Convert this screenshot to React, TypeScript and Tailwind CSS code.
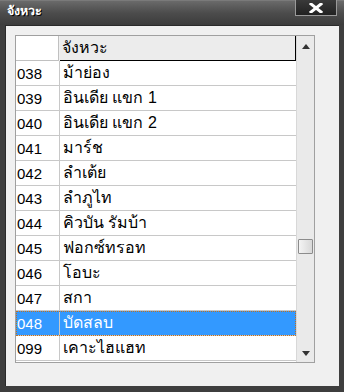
import React from "react";

const rows: [string, string][] = [
  ["038", "ม้าย่อง"],
  ["039", "อินเดีย แขก 1"],
  ["040", "อินเดีย แขก 2"],
  ["041", "มาร์ช"],
  ["042", "ลำเต้ย"],
  ["043", "ลำภูไท"],
  ["044", "คิวบัน รัมบ้า"],
  ["045", "ฟอกซ์ทรอท"],
  ["046", "โอบะ"],
  ["047", "สกา"],
  ["048", "บัดสลบ"],
  ["099", "เคาะไฮแฮท"],
];

const font = { fontFamily: '"Liberation Sans", "Noto Sans", Tahoma, sans-serif' };

export default function App() {
  return (
    <div
      className="w-[344px] h-[392px] bg-[#3e3e3e] flex flex-col overflow-hidden"
      style={font}
    >
      {/* Title bar */}
      <div className="h-[25px] relative bg-gradient-to-b from-[#6a6a6a] via-[#4c4c4c] to-[#3c3c3c] border-t border-[#7a7a7a]">
        <div
          className="absolute left-[7px] top-[4px] text-[12.5px] font-bold text-white leading-none"
          style={{ textShadow: "1px 1px 0 #000" }}
        >
          จังหวะ
        </div>
        <div className="absolute left-[295px] top-[-1px] w-[42px] h-[16px] border border-[#9a9a9a] border-t-0 bg-gradient-to-b from-[#3a3a3a] to-[#222] flex items-center justify-center">
          <svg width="14" height="10" viewBox="0 0 14 10">
            <path d="M2 1 L12 9 M12 1 L2 9" stroke="#fff" strokeWidth="3" strokeLinecap="square" />
          </svg>
        </div>
      </div>

      {/* Client */}
      <div className="flex-1 ml-[5px] mr-[5px] mb-[6px] bg-[#f0f0f0] border-l border-t border-[#2a2a2a] pt-[9px] pl-[9px]">
        <div className="w-[300px] h-[328px] border border-[#a0a0a0] bg-white flex">
          {/* grid */}
          <div className="w-[280px] flex flex-col text-[15px] text-black">
            {/* header */}
            <div className="flex h-[25px]">
              <div className="w-[43px] bg-white border-r border-b border-[#c0c0c0]" />
              <div className="w-[1px] bg-[#f0f0f0]" />
              <div className="flex-1 bg-[#ececec] border-r border-b border-black flex items-center pl-[2px] leading-none text-[16px]">
                จังหวะ
              </div>
            </div>
            {rows.map(([code, name]) => {
              const sel = code === "048";
              return (
                <div
                  key={code}
                  className={
                    "flex h-[25px] border-b border-[#c8c8c8] " +
                    (sel ? "bg-[#3399ff] text-white outline-1 outline-dotted outline-[#c07020] -outline-offset-1" : "")
                  }
                >
                  <div className="w-[44px] flex items-center pl-[1px] border-r border-[#c8c8c8] leading-none">
                    {code}
                  </div>
                  <div className="flex-1 flex items-center pl-[3px] leading-none text-[16px]">{name}</div>
                </div>
              );
            })}
          </div>
          {/* scrollbar */}
          <div className="w-[18px] bg-[#eaeaea] border-l border-[#d8d8d8] relative">
            <svg className="absolute left-[5px] top-[8px]" width="8" height="5" viewBox="0 0 8 5">
              <path d="M4 0 L8 5 L0 5 Z" fill="#333" />
            </svg>
            <div className="absolute left-[1px] top-[203px] w-[15px] h-[15px] border border-[#8c8c8c] rounded-[1px] bg-gradient-to-r from-[#f4f4f4] to-[#d8d8d8]" />
            <svg className="absolute left-[5px] top-[315px]" width="8" height="5" viewBox="0 0 8 5">
              <path d="M0 0 L8 0 L4 5 Z" fill="#333" />
            </svg>
          </div>
        </div>
      </div>
    </div>
  );
}
